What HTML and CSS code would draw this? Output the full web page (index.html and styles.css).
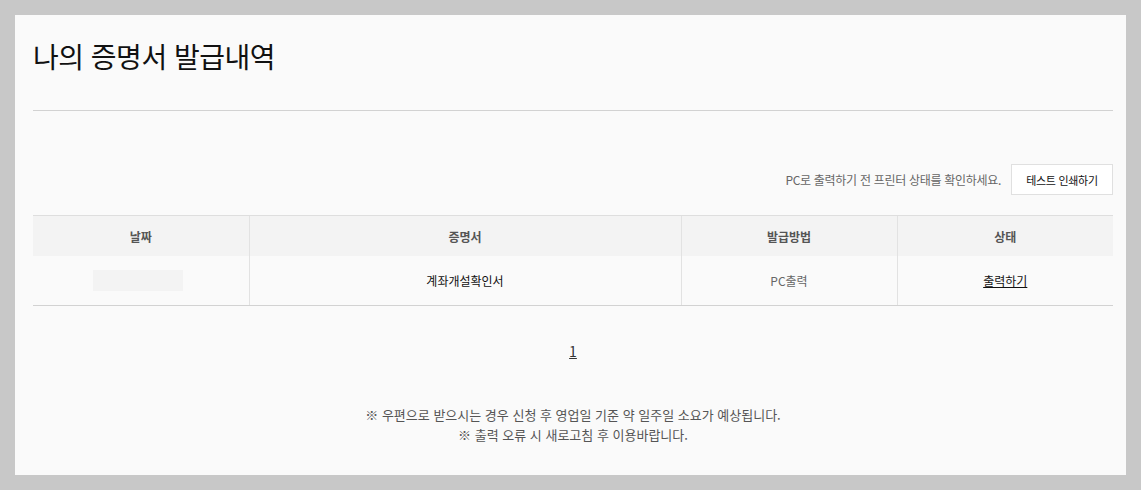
FILE: index.html
```html
<!DOCTYPE html>
<html lang="ko">
<head>
<meta charset="utf-8">
<title>나의 증명서 발급내역</title>
<link rel="stylesheet" href="styles.css">
</head>
<body>
<div class="panel">
  <header class="page-head">
    <h1 class="page-title">나의 증명서 발급내역</h1>
  </header>
  <div class="toolbar">
    <span class="toolbar-msg">PC로 출력하기 전 프린터 상태를 확인하세요.</span>
    <button class="btn-test" type="button">테스트 인쇄하기</button>
  </div>
  <table class="cert-table">
    <colgroup>
      <col class="c-date"><col class="c-cert"><col class="c-method"><col class="c-state">
    </colgroup>
    <thead>
      <tr><th>날짜</th><th>증명서</th><th>발급방법</th><th>상태</th></tr>
    </thead>
    <tbody>
      <tr>
        <td><span class="date-mask"></span></td>
        <td class="cert-name">계좌개설확인서</td>
        <td class="method">PC출력</td>
        <td><a class="print-link" href="#">출력하기</a></td>
      </tr>
    </tbody>
  </table>
  <div class="pager"><a href="#" class="page-num">1</a></div>
  <div class="notes">
    <p>※ 우편으로 받으시는 경우 신청 후 영업일 기준 약 일주일 소요가 예상됩니다.</p>
    <p>※ 출력 오류 시 새로고침 후 이용바랍니다.</p>
  </div>
</div>
</body>
</html>
```

FILE: styles.css
```css
html, body {
  margin: 0;
  padding: 0;
}
body {
  background: #c8c8c8;
  padding: 15px;
  font-family: "Noto Sans CJK KR", "Noto Sans", sans-serif;
  color: #222;
}
.panel {
  background: #fafafa;
  height: 460px;
  box-sizing: border-box;
  padding: 0 13px 0 18px;
}
.page-head {
  height: 96px;
  box-sizing: border-box;
  border-bottom: 1px solid #d2d2d2;
  padding-top: 21px;
}
.page-title {
  margin: 0;
  font-size: 28px;
  font-weight: 400;
  letter-spacing: -0.5px;
  line-height: 40px;
  color: #111;
}
.toolbar {
  display: flex;
  justify-content: flex-end;
  align-items: center;
  gap: 10px;
  margin-top: 53px;
}
.toolbar-msg {
  font-size: 12px;
  color: #666;
  letter-spacing: -0.3px;
}
.btn-test {
  width: 102px;
  height: 31px;
  background: #fff;
  border: 1px solid #e0e0e0;
  font-family: inherit;
  font-size: 11px;
  color: #111;
  padding: 0;
  letter-spacing: -0.3px;
}
.cert-table {
  width: 100%;
  margin-top: 20px;
  border-collapse: collapse;
  table-layout: fixed;
  font-size: 12px;
}
.c-date { width: 20%; }
.c-cert { width: 40%; }
.c-method { width: 20%; }
.c-state { width: 20%; }
.cert-table th {
  background: #f3f3f3;
  height: 40px;
  border-top: 1px solid #dedede;
  font-weight: 700;
  color: #555;
  font-size: 12px;
  padding: 0;
}
.cert-table td {
  height: 49px;
  text-align: center;
  border-bottom: 1px solid #d2d2d2;
  padding: 0;
  font-weight: 400;
}
.cert-table th + th,
.cert-table td + td {
  border-left: 1px solid #e2e2e2;
}
.date-mask {
  display: inline-block;
  width: 90px;
  height: 21px;
  background: #f3f3f3;
  vertical-align: middle;
  margin-left: -6px;
}
.cert-name { color: #111; }
.method { color: #666; }
.print-link {
  color: #111;
  text-decoration: underline;
}
.pager {
  text-align: center;
  margin-top: 35px;
  font-size: 14px;
  line-height: 20px;
}
.page-num {
  color: #333;
  text-decoration: underline;
}
.notes {
  margin-top: 44px;
  text-align: center;
  font-size: 13px;
  color: #555;
}
.notes p {
  margin: 0;
  line-height: 20px;
}
```
